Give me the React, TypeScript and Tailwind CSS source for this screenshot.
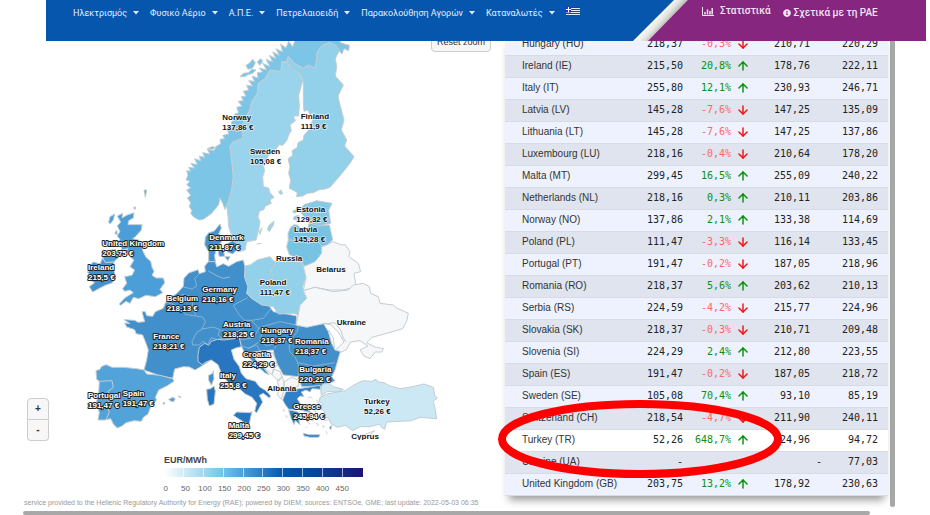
import React from 'react';
import { ArrowDown, ArrowUp } from 'lucide-react';
import { FaInfoCircle } from 'react-icons/fa';

const NAV_ITEMS = ['Ηλεκτρισμός', 'Φυσικό Αέριο', 'Α.Π.Ε.', 'Πετρελαιοειδή', 'Παρακολούθηση Αγορών', 'Καταναλωτές'];

type Row = { name: string; price: string; change?: string; prev: string; week: string };

const ROWS: Row[] = [
    { name: 'Hungary (HU)', price: '218,37', change: '-0,3%', prev: '210,71', week: '220,29' },
    { name: 'Ireland (IE)', price: '215,50', change: '20,8%', prev: '178,76', week: '222,11' },
    { name: 'Italy (IT)', price: '255,80', change: '12,1%', prev: '230,93', week: '246,71' },
    { name: 'Latvia (LV)', price: '145,28', change: '-7,6%', prev: '147,25', week: '135,09' },
    { name: 'Lithuania (LT)', price: '145,28', change: '-7,6%', prev: '147,25', week: '137,86' },
    { name: 'Luxembourg (LU)', price: '218,16', change: '-0,4%', prev: '210,64', week: '178,20' },
    { name: 'Malta (MT)', price: '299,45', change: '16,5%', prev: '255,09', week: '240,22' },
    { name: 'Netherlands (NL)', price: '218,16', change: '0,3%', prev: '210,11', week: '203,86' },
    { name: 'Norway (NO)', price: '137,86', change: '2,1%', prev: '133,38', week: '114,69' },
    { name: 'Poland (PL)', price: '111,47', change: '-3,3%', prev: '116,14', week: '133,45' },
    { name: 'Portugal (PT)', price: '191,47', change: '-0,2%', prev: '187,05', week: '218,96' },
    { name: 'Romania (RO)', price: '218,37', change: '5,6%', prev: '203,62', week: '210,13' },
    { name: 'Serbia (RS)', price: '224,59', change: '-4,2%', prev: '215,77', week: '224,96' },
    { name: 'Slovakia (SK)', price: '218,37', change: '-0,3%', prev: '210,71', week: '209,48' },
    { name: 'Slovenia (SI)', price: '224,29', change: '2,4%', prev: '212,80', week: '223,55' },
    { name: 'Spain (ES)', price: '191,47', change: '-0,2%', prev: '187,05', week: '218,72' },
    { name: 'Sweden (SE)', price: '105,08', change: '70,4%', prev: '93,10', week: '85,19' },
    { name: 'Switzerland (CH)', price: '218,54', change: '-4,7%', prev: '211,90', week: '240,11' },
    { name: 'Turkey (TR)', price: '52,26', change: '648,7%', prev: '24,96', week: '94,72' },
    { name: 'Ukraine (UA)', price: '-', prev: '-', week: '77,03' },
    { name: 'United Kingdom (GB)', price: '203,75', change: '13,2%', prev: '178,92', week: '230,63' },
];

// label: name, price, x, y, light text on a dark country
const LABELS: [string, string, number, number, boolean][] = [
    ['Norway', '137,86 €', 667, 237, false],
    ['Finland', '111,9 €', 902, 235, false],
    ['Sweden', '105,08 €', 750, 340, false],
    ['Estonia', '129,32 €', 889, 512, false],
    ['Latvia', '145,28 €', 882, 573, false],
    ['Denmark', '211,87 €', 628, 598, true],
    ['United Kingdom', '203,75 €', 307, 615, true],
    ['Ireland', '215,5 €', 264, 688, true],
    ['Russia', '', 828, 659, false],
    ['Belarus', '', 949, 692, false],
    ['Germany', '218,16 €', 607, 754, true],
    ['Belgium', '218,13 €', 500, 780, true],
    ['Poland', '111,47 €', 779, 733, false],
    ['Ukraine', '', 1010, 852, false],
    ['Austria', '218,25 €', 669, 859, true],
    ['France', '218,21 €', 460, 894, true],
    ['Hungary', '218,37 €', 784, 875, true],
    ['Romania', '218,37 €', 885, 908, true],
    ['Croatia', '224,29 €', 729, 947, true],
    ['Bulgaria', '220,22 €', 898, 993, true],
    ['Italy', '255,8 €', 660, 1012, true],
    ['Portugal', '191,47 €', 264, 1072, true],
    ['Spain', '191,47 €', 368, 1064, true],
    ['Albania', '', 802, 1051, false],
    ['Greece', '245,94 €', 880, 1105, true],
    ['Malta', '299,45 €', 686, 1161, true],
    ['Turkey', '52,26 €', 1092, 1088, false],
    ['Cyprus', '', 1054, 1194, false],
];

const TICKS = ['0', '50', '100', '150', '200', '250', '300', '350', '400', '450'];

function NavCaret() {
    return (
        <svg viewBox="0 0 6 4" className="w-1.5 h-1 fill-current">
            <path d="M0 0h6L3 3.6z" />
        </svg>
    );
}

function GreekFlag() {
    return (
        <svg viewBox="0 0 14 9" className="w-3.5 h-[9px]">
            <rect width="14" height="9" fill="#e8ecff" />
            <path d="M0 .5h14M5 2.5h9M5 4.5h9M0 6.5h14M0 8.5h14" stroke="#2a35b5" />
            <rect width="5" height="5.5" fill="#2a35b5" />
            <path d="M2.5 0v5.5M0 2.5h5" stroke="#fff" />
        </svg>
    );
}

function Header() {
    return (
        <header className="relative z-10 ml-[46px] mr-1 h-[41px] flex font-[Roboto,'Open_Sans',sans-serif] overflow-hidden">
            <nav className="flex-1 min-w-0 bg-[#0756ae] pl-[27px] pt-[5px] flex items-start gap-[11px] text-[9px] leading-4 text-[#e4eefa] whitespace-nowrap">
                {NAV_ITEMS.map(item => (
                    <button key={item} className="flex items-center gap-1.5">
                        {item} <NavCaret />
                    </button>
                ))}
                <button aria-label="Ελληνικά" className="pt-0.5"><GreekFlag /></button>
            </nav>
            <svg viewBox="0 0 56 41" className="w-14 h-[41px] shrink-0" aria-hidden="true">
                <defs>
                    <linearGradient id="silver" gradientUnits="userSpaceOnUse" x1="19" y1="20" x2="31" y2="31">
                        <stop offset="0" stopColor="#ffffff" />
                        <stop offset=".45" stopColor="#e4e4e0" />
                        <stop offset="1" stopColor="#9c9c98" />
                    </linearGradient>
                </defs>
                <rect width="56" height="41" fill="#0756ae" />
                <path d="M41 0H56V41H0z" fill="url(#silver)" />
                <path d="M55 0H56V41H15z" fill="#86267f" />
            </svg>
            <div className="w-[237px] shrink-0 bg-[#86267f] pl-[13px] flex items-start gap-3 text-[10px] leading-4 font-medium text-[#f3e4f2] whitespace-nowrap">
                <a href="#stats" className="flex items-center gap-1.5 pt-[3px]">
                    <svg viewBox="0 0 12 9" className="w-3 h-[9px]" fill="none" stroke="currentColor">
                        <path d="M.5 0v8.5H12" />
                        <path d="M3 7.5V5M5.5 7.5V2.5M8 7.5V4M10.2 7.5V1" strokeWidth="1.5" />
                    </svg>
                    Στατιστικά
                </a>
                <a href="#about" className="flex items-center gap-[3px] pt-[5px]">
                    <FaInfoCircle className="w-2 h-2" /> Σχετικά με τη ΡΑΕ
                </a>
            </div>
        </header>
    );
}

function EuropeMap() {
    return (
        <svg viewBox="0 0 1515 1197" className="block w-full h-auto" role="img" aria-label="EUR/MWh">
            <g stroke="#c4cdd2" strokeWidth="3" strokeLinejoin="round">
                {/* Scandinavia */}
                <g transform="translate(510 -3)">
                    <path fill="#7cc5e6" d="M88 540L72 532 62 520 66 512 58 500 62 488 52 474 62 466 50 450 62 444 50 434 60 424 48 420 54 406 50 392 62 394 56 382 74 384 62 370 82 374 74 356 92 362 88 348 104 352 98 338 120 342 112 328 132 332 140 318 152 312 150 298 164 296 158 286 176 282 172 268 186 262 184 246 196 236 194 222 206 218 200 202 216 198 204 184 220 182 214 170 228 168 220 154 236 150 230 136 248 138 236 122 254 124 246 108 264 114 262 98 278 96 268 84 290 90 278 70 300 80 288 58 308 66 298 46 318 56 308 36 328 46 318 26 338 36 332 12 348 24 356 4 368 20 376 0H505L516 10 538 16 536 32 522 26 516 42 500 24 478 8 455 18 442 35 440 60 435 85 415 75 400 85 375 72 355 50 350 66 335 65 333 95 300 90 285 115 265 130 262 160 245 185 240 210 225 235 215 265 220 295 190 305 180 320 185 360 190 410 185 450 175 485 165 508 158 490 150 474 146 494 125 520 100 538Z" />
                    <path fill="#7cc5e6" d="M210 110l10-10 16-2 8-10 14 2-10 10-14 4-10 6zM228 76l10-6 10-12 8 10-8 16-14 4zM262 66l10-10 6 8-8 12zM112 326l14-6 12 2-10 6z" />
                    <path fill="#9ad3ec" d="M335 65L350 68 368 90 390 100 398 122 386 165 388 195 386 228 370 228 376 242 360 255 364 272 356 285 350 302 338 316 328 314 316 330 298 344 288 358 280 375 284 392 278 410 280 440 296 444 300 458 312 472 300 480 304 490 286 498 282 508 268 514 264 530 270 545 266 570 258 600 230 605 225 630 205 636 195 625 190 600 176 560 174 530 170 495 175 485 185 450 190 410 185 360 180 320 190 305 220 295 215 265 225 235 240 210 245 185 262 160 265 130 285 115 300 90 333 95Z" />
                    <path fill="#93d0ea" d="M350 66L355 50 375 72 400 85 415 75 435 85 440 60 442 35 455 18 478 8 498 16 508 32 496 55 500 80 496 108 520 135 504 168 510 195 522 240 514 270 530 300 524 318 552 350 540 370 516 400 480 442 462 448 450 448 430 458 412 460 398 468 380 470 382 458 372 452 358 445 362 420 356 400 360 380 354 356 368 346 366 332 382 322 384 308 400 300 402 286 416 270 426 246 432 218 420 224 414 210 402 214 400 190 400 125 390 100 368 90Z" />
                    <path fill="#9ad3ec" d="M298 555l14-12-2 12-12 20-6-8zM268 575l8-12-6 20zM326 455l8-4 4 10-8 2z" />
                </g>

                {/* British Isles and Denmark */}
                <g transform="translate(240 447)">
                    <path fill="#4b9ed7" d="M112 78L128 70 126 84 140 76 162 68 160 84 146 92 144 104 186 104 184 120 166 140 158 146 176 150 186 166 188 182 198 202 212 214 216 232 222 244 216 256 228 264 250 264 254 278 240 298 248 308 226 320 198 316 176 326 160 322 150 340 138 334 122 346 118 342 134 324 160 308 150 300 134 304 128 296 140 280 134 260 156 256 164 240 150 230 162 210 152 202 154 184 138 188 144 176 124 180 126 166 112 160 120 148 112 138 120 124 112 108 122 96Z" />
                    <path fill="#4b9ed7" d="M86 96l4-16 14-8-4 18-10 12zM104 130l6-10 2 14zM192 0l8 0-4 22zM160 54l6-4 0 8zM68 204L82 182 106 178 116 200 102 216 76 218Z" />
                    <path fill="#4493d0" d="M30 226L40 216 60 222 68 204 76 218 102 216 100 236 106 256 98 278 76 286 60 294 38 306 28 290 44 278 24 266 32 256 22 246 34 240Z" />
                    <path fill="#4493d0" d="M376 142L386 128 402 124 420 102 424 114 416 132 432 144 422 158 410 176 404 196 406 216 386 214 386 186 374 164ZM436 164l22-12 18 12-8 18-10 10-16-6zM414 182l16 0 4 16-16 2zM434 200l16 0-6 12z" />
                </g>

                {/* Central and western Europe */}
                <path fill="#4190cc" d="M625 662L646 662 650 678 670 668 686 676 710 662 730 657 736 682 734 707 744 737 740 757 755 772 780 787 805 792 820 812 860 819 890 825 888 852 920 857 970 847 985 872 995 907 1005 927 1022 929 1015 952 1005 987 995 1007 1005 1020 965 1035 905 1037 895 1007 850 1002 825 957 820 927 780 930 760 934 775 960 808 1002 794 995 762 966 748 950 734 936 725 917 700 900 625 962 604 976 585 987 568 978 550 977 524 984 518 1012 480 1004 432 987 440 957 445 927 438 907 428 882 408 878 404 866 380 858 374 846 390 848 372 836 404 838 414 844 434 842 426 812 436 812 440 824 458 826 466 812 490 802 496 786 512 770 532 756 550 736 552 712 566 696 594 686 598 698 616 692 614 676Z" />
                <g fill="none" strokeWidth="2" stroke="#a9c3d6">
                    <path d="M498 784L520 790 542 800 556 820 580 824 608 828M550 738L576 744 590 735 584 712 598 698M545 760L572 766 580 776 576 800 588 822M608 828L616 842 606 864 590 875 576 900 578 912 598 912M606 864L640 858 660 866 654 882 668 892 650 896 634 890 622 912 610 900 598 912" />
                    <path d="M743 770L700 793 718 822 734 838 720 852 730 862 704 876 664 868M755 838L790 832 812 804M734 838L755 838 776 862 762 890 728 896 718 892 668 892M776 862L790 856 840 842 888 852M790 856L780 900 800 915 836 904 868 900 892 872 896 852M718 892L724 914 746 922 776 904M745 922L770 912M824 924L830 906M868 902L868 930 886 950 895 970 895 1007M895 965L940 975 1005 965M780 930L770 912" />
                    <path d="M625 690L652 705 670 712 690 708" stroke="#c4cdd2" />
                </g>

                {/* Iberia, Italy and the islands */}
                <g transform="translate(240 807)">
                    <path fill="#51a3d9" d="M48 182L60 178 64 170 78 164 96 172 130 172 170 176 192 180 200 192 240 196 278 206 282 214 260 228 236 240 226 262 230 270 214 286 204 312 190 322 184 334 162 332 138 338 126 348 112 354 100 342 92 326 74 330 54 330 58 308 52 290 48 282 56 250 58 214 50 208Z" />
                    <path fill="none" d="M58 214L96 212 100 232 84 244 92 262 80 286 88 306 78 330" />
                    <path fill="#51a3d9" d="M266 268l12-6 8 4-6 10-10-4zM294 258l8 2-2 4zM248 280l6-4-2 8z" />
                    <path fill="#4190cc" d="M386 196L398 190 400 182 402 206 394 226 386 210Z" />
                    <path fill="#2876c0" d="M380 238L392 236 402 228 406 244 402 282 388 288 382 268Z" />
                    <path fill="#2876c0" d="M354 134L358 112 374 100 386 106 394 94 412 88 432 90 478 84 484 110 468 114 454 120 462 148 478 170 484 190 498 206 526 214 538 230 558 242 572 258 568 264 550 250 538 256 548 276 540 290 530 308 524 304 530 280 516 262 496 252 480 238 460 230 440 212 424 190 414 164 394 150 378 156 366 164 354 154ZM460 316L470 306 510 308 516 304 512 322 508 342 494 338 472 324Z" />
                </g>

                {/* Poland, the Baltics and the east */}
                <g transform="translate(660 447)">
                    <path fill="#93d0ea" d="M75 228L92 224 112 210 150 200 162 214 242 214 252 230 258 262 248 290 260 325 240 345 235 375 220 370 175 372 160 350 125 345 95 325 82 310 84 290 74 262Z" />
                    <path fill="none" d="M168 214L160 232 148 252 160 258M110 162l14-2" />
                    <path fill="#84c9e8" d="M244 54L252 44 272 38 290 32 336 40 326 60 332 100 312 104 295 108 268 98 258 88 248 74 240 66ZM222 80l12-4 6 6-10 8-10-2zM218 64l12-6 4 6-12 6z" />
                    <path fill="#76c3e4" d="M205 150L204 130 212 112 222 104 234 106 244 120 262 118 268 98 295 108 328 105 338 150 320 165 305 170 305 195 285 215 265 230 250 226 244 212 228 202 208 194 200 170ZM205 150L240 152 280 142 306 168" />
                    <g fill="#f6f7f8">
                        <path d="M338 155L365 165 376 164 390 185 386 200 415 220 422 245 402 250 408 290 370 300 330 300 285 292 250 302 258 262 250 230 285 215 305 190 305 170 320 165Z" />
                        <path d="M250 302L285 292 340 305 385 300 400 285 430 280 448 290 452 310 475 320 480 340 520 345 530 354 565 370 560 394 548 416 500 430 456 442 440 458 462 470 490 476 486 486 466 486 450 506 432 498 420 480 444 468 420 452 392 456 380 478 365 486 346 480 372 456 356 428 334 405 315 400 260 412 228 405 235 375 240 345 260 325Z" />
                        <path fill="none" d="M316 402L344 398 362 420 370 444 378 456M344 480L340 444 326 420" />
                    </g>
                </g>

                {/* Balkans, Greece and Turkey */}
                <g transform="translate(660 807)">
                    <path fill="#f6f7f8" d="M92 128L120 124 158 128 168 150 172 166 160 178 156 194 130 172 108 150ZM156 194L162 178 180 184 186 200 178 212 170 208ZM172 212L186 200 192 216 192 240 184 268 172 254 178 236ZM192 216L214 202 236 210 236 228 208 240 192 238Z" />
                    <path fill="#2f80c6" d="M188 270L198 244 236 236 264 232 300 226 302 238 276 236 270 246 258 240 244 246 252 260 240 258 232 266 244 286 262 298 274 308 256 304 236 298 206 298 196 284ZM206 300L228 304 240 310 242 322 234 320 240 344 226 332 222 344 212 322ZM250 370L268 374 300 374 296 382 270 382 252 378ZM328 352l8-6-4 14z" />
                    <path fill="#eef2f4" strokeWidth="2" d="M262 264l10-4 6 6M288 270l8 4 2 8-8-6M280 300l10 4-4 6M296 320l8 0-2 6M276 326l6 6-8 0M262 336l8 4-4 4M288 340l8 2-4 6M312 332l8-4 2 6M306 346l8 4-6 4M190 296l4 8-6-2M198 314l4 8-6-2M318 362l4 8-4 2M256 350l6 4" />
                    <path fill="#cce8f4" d="M302 238L308 222 326 220 340 230 370 238 352 246 322 244 304 256ZM300 262L320 252 376 242 400 226 428 212 454 214 468 208 476 216 492 218 510 228 540 236 568 232 612 222 640 232 644 256 652 264 640 274 644 290 650 326 624 324 600 322 574 332 540 334 500 336 494 358 484 352 480 342 450 350 420 350 398 362 376 346 352 352 334 342 324 324 308 318 314 304 302 296 308 282 298 274Z" />
                    <path fill="#f6f7f8" d="M420 378l18-6 26-10-14 14-16 10z" />
                </g>
            </g>

            <g fontFamily="'Liberation Sans', Arial, sans-serif" fontWeight="bold" fontSize="24" strokeLinejoin="round" paintOrder="stroke">
                {LABELS.map(([name, price, x, y, light]) => (
                    <text key={name} fill={light ? '#fff' : '#111'} stroke={light ? '#222' : '#fff'} strokeOpacity={light ? 1 : 0.7} strokeWidth={light ? 6 : 5}>
                        <tspan x={x} y={y}>{name}</tspan>
                        {price && <tspan x={x} y={y + 30}>{price}</tspan>}
                    </text>
                ))}
            </g>
        </svg>
    );
}

function MapPanel() {
    return (
        <section className="relative min-w-0 font-['Liberation_Sans',Arial,sans-serif]">
            <EuropeMap />
            <button className="absolute -top-2.5 right-3.5 w-[60px] h-[21px] border border-[#ccc] rounded-sm bg-[#f7f7f7] text-[9px] leading-4 text-[#333] whitespace-nowrap">
                Reset zoom
            </button>
            <div className="absolute left-[27px] top-[357px] w-[22px] flex flex-col text-[10px] leading-5 font-bold text-[#333]">
                <button className="h-[22px] border border-[#ccc] rounded-t-sm bg-[#f7f7f7]">+</button>
                <button className="h-[21px] border border-t-0 border-[#ccc] rounded-b-sm bg-[#f7f7f7]">-</button>
            </div>
            <div className="ml-[164px] mt-3.5 w-[199px]">
                <h3 className="text-[9px] leading-3 font-bold text-[#444]">EUR/MWh</h3>
                <div className="mt-0.5 h-[9px] grid grid-cols-10 divide-x divide-white/60 bg-[linear-gradient(90deg,#ffffff_0%,#a3d7ee_20%,#6fc3e6_30%,#4a9fd8_40%,#0855ac_60%,#0b3f95_80%,#1a1570_100%)]">
                    {TICKS.map(tick => <span key={tick} />)}
                </div>
                <div className="-ml-2 mr-[11px] mt-1 grid grid-cols-10 text-center text-[8px] leading-4 text-[#666]">
                    {TICKS.map(tick => <span key={tick}>{tick}</span>)}
                </div>
            </div>
            <p className="ml-6 text-[7px] leading-3 text-[#999] whitespace-nowrap">
                service provided to the Hellenic Regulatory Authority for Energy (RAE); powered by DIEM; sources: ENTSOe, GME; last update: 2022-05-03 06:35
            </p>
        </section>
    );
}

function ChangeCells({ change }: { change?: string }) {
    if (!change) return <td colSpan={2} />;
    const down = change.startsWith('-');
    return (
        <>
            <td className={down ? 'text-[#fa6a60]' : 'text-[#0a900a]'}>{change}</td>
            <td className="pl-[5px]">
                {down
                    ? <ArrowDown className="w-3.5 h-3.5 text-[#f51010]" strokeWidth={2.5} />
                    : <ArrowUp className="w-3.5 h-3.5 text-[#0a900a]" strokeWidth={2.5} />}
            </td>
        </>
    );
}

function PriceTable() {
    return (
        <section className="min-w-0 flex items-start gap-0.5">
            <div className="relative flex-1 min-w-0 -mt-2">
                <table className="w-full table-fixed border-collapse text-right font-['DejaVu_Sans_Mono',monospace] text-[10px] leading-4 text-[#222] shadow-[0_8px_8px_-4px_rgba(0,0,0,0.4)]">
                    <colgroup>
                        <col />
                        <col className="w-[50px]" />
                        <col className="w-12" />
                        <col className="w-[21px]" />
                        <col className="w-[70px]" />
                        <col className="w-[66px]" />
                    </colgroup>
                    <tbody>
                        {ROWS.map(row => (
                            <tr
                                key={row.name}
                                className={`h-[22px] border-b border-[#d6dbe6] ${row.name === 'Turkey (TR)' ? 'bg-white' : 'odd:bg-[#edf2fe] even:bg-[#dfe4ef]'}`}
                            >
                                <th scope="row" className="pl-[17px] text-left font-normal font-['Liberation_Sans',Arial,sans-serif] text-[10px] leading-4 text-[#333] whitespace-nowrap">
                                    {row.name}
                                </th>
                                <td>{row.price}</td>
                                <ChangeCells change={row.change} />
                                <td className={row.prev === '-' ? 'pr-0' : 'pr-3'}>{row.prev}</td>
                                <td className="pr-2.5">{row.week}</td>
                            </tr>
                        ))}
                    </tbody>
                </table>
                {/* hand-drawn marker round the Turkey row */}
                <svg viewBox="0 0 284 78" className="absolute -left-[7px] top-[367px] w-[284px] h-[78px] pointer-events-none" fill="none" aria-hidden="true">
                    <ellipse cx="142" cy="39" rx="138" ry="35" stroke="#fe0000" strokeWidth="8" />
                </svg>
            </div>
            <div className="w-[5px] h-[466px] rounded-b-full bg-[#a8a8a8]" />
        </section>
    );
}

export default function App() {
    return (
        <div className="bg-white overflow-hidden">
            <Header />
            <main className="grid grid-cols-[505fr_390fr] pr-[35px] overflow-hidden">
                <MapPanel />
                <PriceTable />
            </main>
            <div className="ml-[23px] mr-[60px] mt-0.5 h-1 rounded-full bg-[#a8a8a8]" />
        </div>
    );
}
